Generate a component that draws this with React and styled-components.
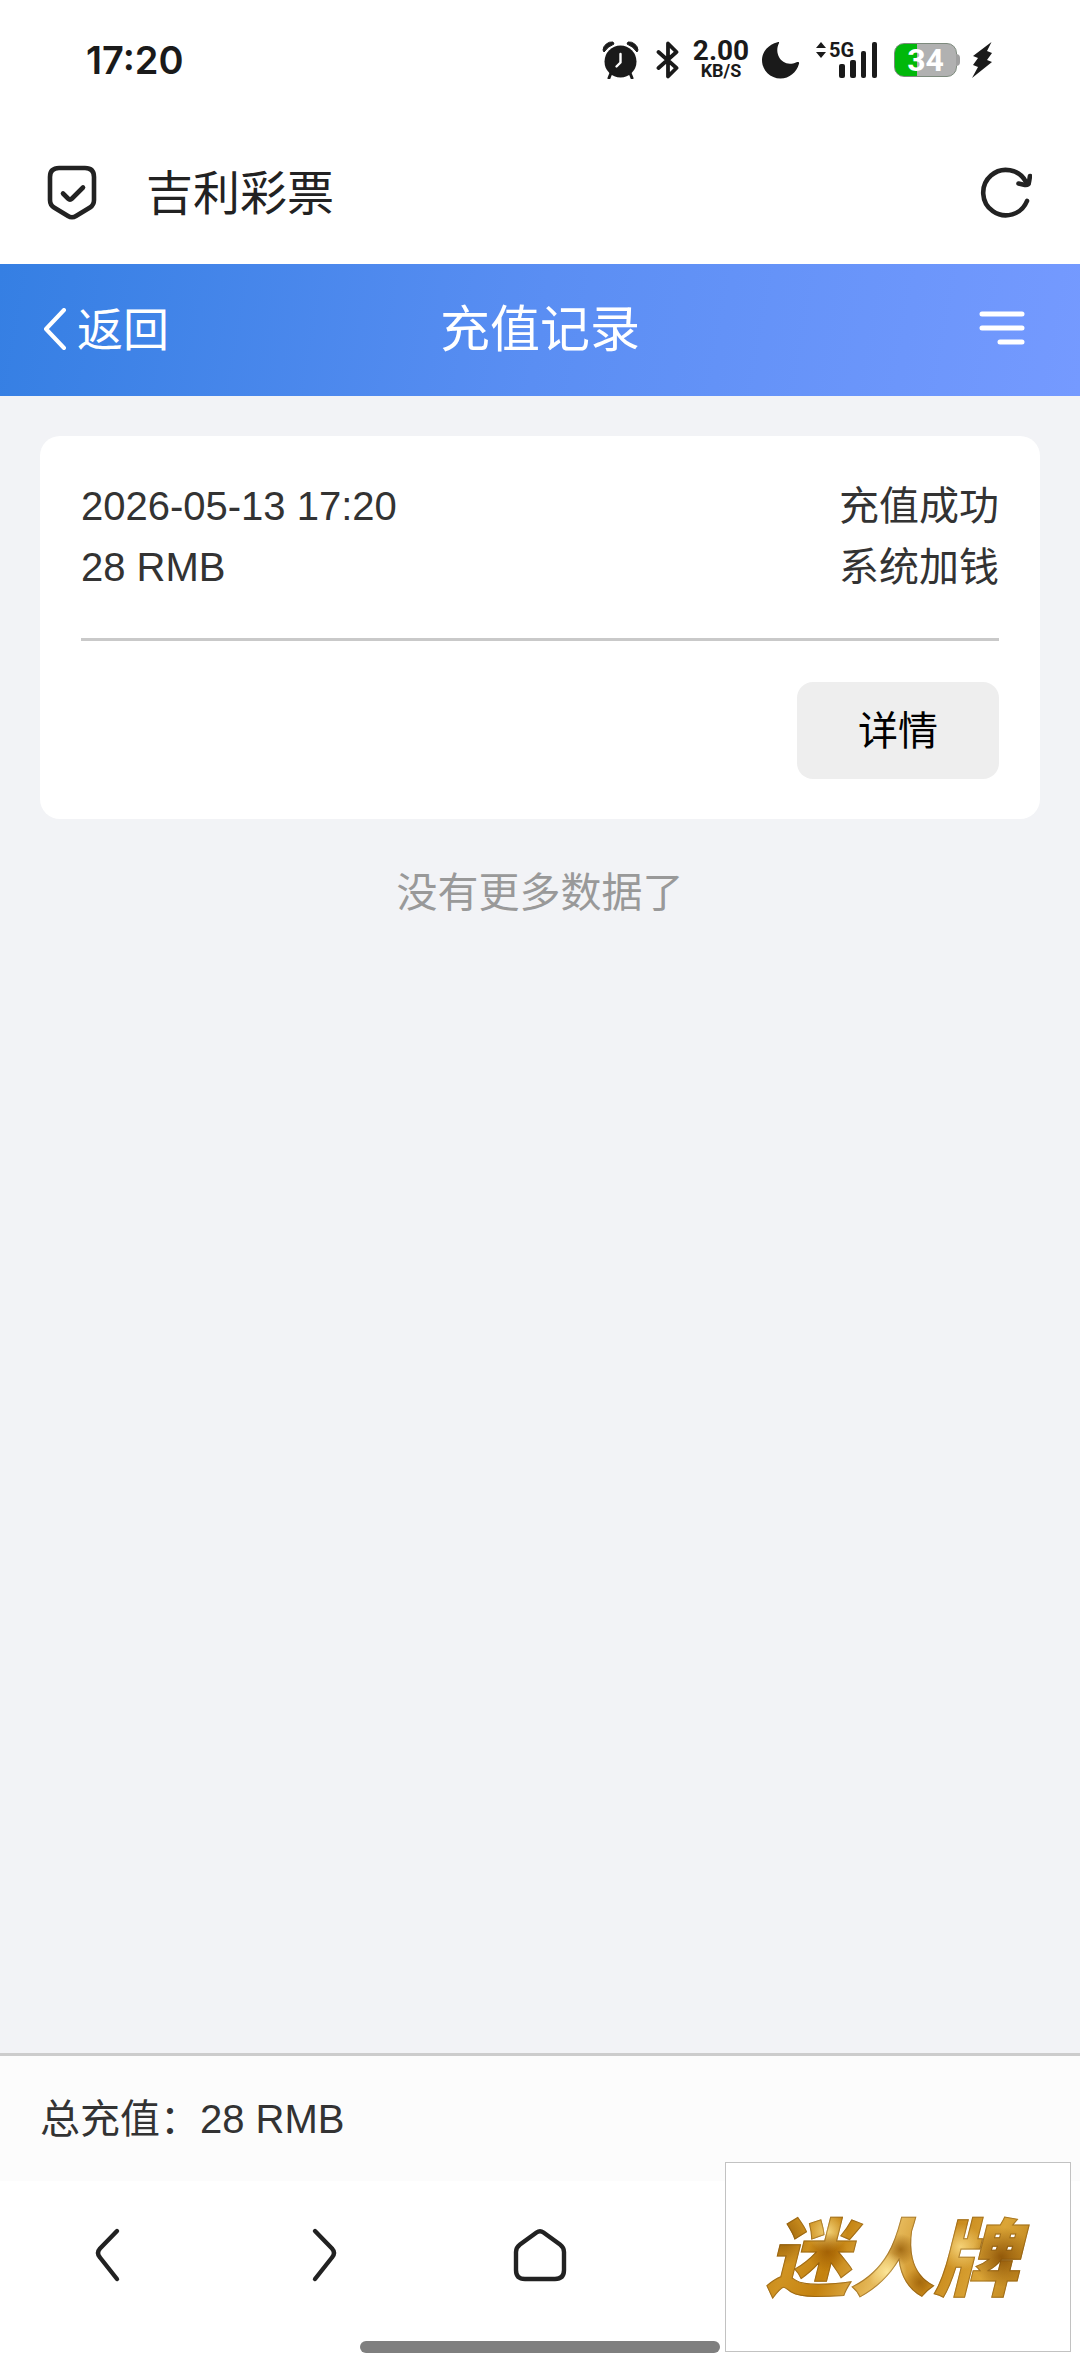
import React from "react"
import styled, {createGlobalStyle} from 'styled-components'

const GlobalStyle = createGlobalStyle`
	*{box-sizing:border-box;}
	body{
		margin:0;
		background:#f2f3f6;
		color:#333;
		font-family:"Liberation Sans", "Noto Sans CJK SC", sans-serif;
		font-size:40px;
		line-height:61px;
	}
	button{
		margin:0;
		padding:0;
		border:0;
		background:none;
		color:inherit;
		font-family:inherit;
	}
	a{
		color:inherit;
		text-decoration:none;
	}
	h1,p{
		margin:0;
		font-weight:400;
	}
	svg{display:block;}
`

const Screen = styled.div`
	display:flex;
	flex-direction:column;
	min-height:100vh;
`

////PHONE STATUS BAR
const StatusRow = styled.div`
	display:flex;
	align-items:center;
	justify-content:space-between;
	height:120px;
	padding:0 88px 0 86px;
	background:#fff;
	color:#1a1a1a;
	font-family:Roboto, sans-serif;
	font-weight:700;
`

const Clock = styled.time`
	font-family:Inter, sans-serif;
	font-size:38px;
	font-weight:600;
	line-height:40px;
`

const StatusIcons = styled.div`
	display:flex;
	align-items:center;
	gap:12px;
`

const NetSpeed = styled.div`
	display:flex;
	flex-direction:column;
	align-items:center;
	width:58px;
`

const SpeedValue = styled.span`
	font-size:28px;
	line-height:22px;
`

const SpeedUnit = styled.span`
	font-size:18px;
	line-height:18px;
`

const Battery = styled.div`
	position:relative;
	display:flex;
	align-items:center;
	justify-content:center;
	width:63px;
	height:34px;
	margin-right:3px;
	border:1px solid #7d8a7d;
	border-radius:10px;
	background:linear-gradient(90deg, #00b80a ${props=>props.$level}%, #b1b1b1 ${props=>props.$level}%);
	color:#fff;
	font-size:32px;
	line-height:32px;
	&::after{
		content:'';
		position:absolute;
		right:-4px;
		top:10px;
		width:4px;
		height:12px;
		border-radius:0 4px 4px 0;
		background:#a0a0a0;
	}
`

const Signal = styled.svg`
	overflow:visible;
	font-size:20px;
`

const StatusBar = () =>(
	<StatusRow>
		<Clock>17:20</Clock>
		<StatusIcons>
			<svg width="42" height="38" viewBox="0 0 42 38" fill="#1a1a1a">
				<path d="M1 9A9 9 0 0 1 11 1L12 3A22 22 0 0 0 2 11ZM36 9A9 9 0 0 0 26 1L25 3A22 22 0 0 1 35 11Z" stroke="#1a1a1a" strokeLinejoin="round"/>
				<circle cx="18.5" cy="20.5" r="16"/>
				<path d="M9 32L7 37M28 32L30 37" stroke="#1a1a1a" strokeWidth="3" strokeLinecap="round"/>
				<path d="M18.5 13V21.5L14.5 25.5" fill="none" stroke="#fff" strokeWidth="2.4" strokeLinecap="round" strokeLinejoin="round"/>
			</svg>
			<svg width="24" height="38" viewBox="0 0 24 38" fill="none" stroke="#1a1a1a" strokeWidth="3.8" strokeLinecap="round" strokeLinejoin="round">
				<path d="M2.5 11L20.5 27L12 35.5V2.5L20.5 11L2.5 27"/>
			</svg>
			<NetSpeed>
				<SpeedValue>2.00</SpeedValue>
				<SpeedUnit>KB/S</SpeedUnit>
			</NetSpeed>
			<svg width="42" height="38" viewBox="0 0 42 38" fill="#1a1a1a">
				<path d="M15.500 1.200C17 .6 17.500 1.200 16.800 2.600C11.500 13.500 21 27.500 34.500 21.200C36.400 20.500 37.500 21 37 22.800C34.500 31.500 27.500 37.500 18.500 37.500C8.500 37.500 0 29.500 0 19C0 10.500 6.500 3.500 15.500 1.200Z"/>
			</svg>
			<Signal width="66" height="38" viewBox="0 0 66 38" fill="#1a1a1a">
				<path d="M0 7L5 1L10 7ZM0 11H10L5 17Z"/>
				<text x="13" y="16">5G</text>
				<rect x="23" y="23" width="6" height="14" rx="2"/>
				<rect x="34" y="19" width="6" height="18" rx="2"/>
				<rect x="45" y="10" width="5" height="27" rx="2"/>
				<rect x="56" y="1" width="5" height="36" rx="2"/>
			</Signal>
			<Battery $level={36}>34</Battery>
			<svg width="20" height="38" viewBox="0 0 20 38" fill="#1a1a1a">
				<path d="M19.500 1L1 15L6 17L1 24L6 26L0 37L20 21L15 19L20 12L15 10Z"/>
			</svg>
		</StatusIcons>
	</StatusRow>
)

////BROWSER ADDRESS BAR
const AddressRow = styled.div`
	display:flex;
	align-items:center;
	height:144px;
	padding:0 48px 0 46px;
	background:#fff;
	color:#222;
`

const SiteName = styled.p`
	flex:1;
	padding:4px 0 0 48px;
	font-size:47px;
	line-height:60px;
`

const AddressBar = () =>(
	<AddressRow>
		<svg width="52" height="56" viewBox="0 0 52 56" fill="none" stroke="#222" strokeWidth="4.6" strokeLinecap="round" strokeLinejoin="round">
			<path d="M13 4H39Q48 4 48 13V36Q48 41 44 43.500L30 52Q26 54.500 22 52L8 43.500Q4 41 4 36V13Q4 4 13 4Z"/>
			<path d="M17 29.500L22 34.500Q24 36.500 26 34.500L37 23.500"/>
		</svg>
		<SiteName>吉利彩票</SiteName>
		<button type="button" aria-label="刷新">
			<svg width="52" height="52" viewBox="0 0 52 52" fill="none" stroke="#222" strokeWidth="4.6" strokeLinecap="round" strokeLinejoin="round">
				<path d="M47 35A22.700 22.700 0 1 1 46 16"/>
				<path d="M38.500 17.500L45 19Q49 19.500 49 16L50 10"/>
			</svg>
		</button>
	</AddressRow>
)

////PAGE HEADER
const HeaderRow = styled.header`
	display:grid;
	grid-template-columns:1fr auto 1fr;
	align-items:center;
	height:132px;
	padding:0 42px;
	background:linear-gradient(100deg, #357fe3, #5a8ef3 50%, #759aff);
	color:#fff;
`

const BackLink = styled.a`
	display:flex;
	align-items:center;
	gap:9px;
	font-size:46px;
`

const PageTitle = styled.h1`
	font-size:50px;
	line-height:60px;
`

const MenuButton = styled.button`
	justify-self:end;
	padding:0 10px 4px 0;
`

const Header = () =>(
	<HeaderRow>
		<BackLink href="#back">
			<svg width="26" height="44" viewBox="0 0 26 44" fill="none" stroke="#fff" strokeWidth="4" strokeLinecap="round" strokeLinejoin="round">
				<path d="M22 2L4 21L22 40"/>
			</svg>
			返回
		</BackLink>
		<PageTitle>充值记录</PageTitle>
		<MenuButton type="button" aria-label="菜单">
			<svg width="50" height="34" viewBox="0 0 50 34" fill="none" stroke="#fff" strokeWidth="5" strokeLinecap="round">
				<path d="M4 3H44M4 17H44M22 31H44"/>
			</svg>
		</MenuButton>
	</HeaderRow>
)

////RECHARGE RECORDS
const Records = styled.main`
	flex:1;
	padding:40px;
`

const Card = styled.article`
	padding:40px 41px;
	border-radius:20px;
	background:#fff;
`

const CardLine = styled.div`
	display:flex;
	justify-content:space-between;
`

const CardAction = styled.div`
	display:flex;
	justify-content:flex-end;
	margin-top:40px;
	padding-top:41px;
	border-top:3px solid #c9c9c9;
`

const DetailButton = styled.button`
	width:202px;
	height:97px;
	border-radius:16px;
	background:#eee;
	color:#000;
	font-size:40px;
	line-height:60px;
`

const EndNote = styled.p`
	padding-top:44px;
	color:#999;
	font-size:41px;
	text-align:center;
`

const RecordCard = (props) =>{
	const {time, amount, status, source} = props.record;
	return (
		<Card>
			<CardLine><time>{time}</time><span>{status}</span></CardLine>
			<CardLine><span>{amount}</span><span>{source}</span></CardLine>
			<CardAction>
				<DetailButton type="button">详情</DetailButton>
			</CardAction>
		</Card>
	)
}

const Total = styled.footer`
	height:128px;
	padding:33px 40px 0;
	border-top:3px solid #ccc;
	background:#fcfcfc;
`

////BROWSER NAVIGATION
const Bottom = styled.div`
	position:relative;
	display:flex;
	flex-direction:column;
	align-items:center;
	padding-bottom:21px;
	background:#fff;
`

const NavRow = styled.nav`
	display:grid;
	grid-template-columns:repeat(5, 1fr);
	width:100%;
	height:160px;
	padding-top:12px;
`

const NavButton = styled.button`
	display:flex;
	align-items:center;
	justify-content:center;
	height:124px;
`

const HomeBar = styled.div`
	width:33.3333%;
	height:12px;
	border-radius:6px;
	background:#7f7f7f;
`

//floating badge over the right end of the navigation
const Badge = styled.a`
	position:absolute;
	right:9px;
	bottom:22px;
	display:flex;
	align-items:center;
	justify-content:center;
	width:346px;
	height:190px;
	border:1px solid #c2c2c2;
	background:#fff;
`

const BadgeText = styled.span`
	padding:6px 16px 0 4px;
	background:
		radial-gradient(circle at 8% 35%, rgba(122,70,0,.6), transparent 10%),
		radial-gradient(circle at 24% 46%, rgba(150,84,0,.7), transparent 9%),
		radial-gradient(circle at 24% 30%, rgba(255,232,150,.8), transparent 9%),
		radial-gradient(circle at 46% 62%, rgba(255,236,160,.9), transparent 12%),
		radial-gradient(circle at 51% 44%, rgba(140,82,0,.7), transparent 10%),
		radial-gradient(circle at 58% 70%, rgba(140,82,0,.6), transparent 8%),
		radial-gradient(circle at 88% 50%, rgba(130,72,0,.8), transparent 12%),
		radial-gradient(circle at 73% 42%, rgba(255,226,140,.8), transparent 11%),
		linear-gradient(115deg, #b97a0c, #d09322 18%, #c4820f 30%, #e6b95a 46%, #c8881a 62%, #dba537 78%, #a96c08);
	-webkit-background-clip:text;
	background-clip:text;
	-webkit-text-stroke:1px rgba(120,74,8,.5);
	color:transparent;
	font-size:84px;
	font-style:italic;
	font-weight:900;
	line-height:120px;
`

const navIcons = [
	{label:'后退', path:'M37 4L20 21.500Q16 26 20 30.500L37 52'},
	{label:'前进', path:'M19 4L36 21.500Q40 26 36 30.500L19 52'},
	{label:'主页', path:'M24.500 5.500Q28 3 31.500 5.500L48 17.500Q52 20.500 52 25V43Q52 52 43 52H13Q4 52 4 43V25Q4 20.500 8 17.500Z'}
]

const Navigation = () =>(
	<Bottom>
		<NavRow>
			{navIcons.map((item,index)=>(
				<NavButton type="button" key={index} aria-label={item.label}>
					<svg width="56" height="56" viewBox="0 0 56 56" fill="none" stroke="#222" strokeWidth="4.4" strokeLinecap="round" strokeLinejoin="round">
						<path d={item.path}/>
					</svg>
				</NavButton>
			))}
		</NavRow>
		<HomeBar/>
		<Badge href="#badge"><BadgeText>迷人牌</BadgeText></Badge>
	</Bottom>
)

const records = [
	{time:'2026-05-13 17:20', amount:'28 RMB', status:'充值成功', source:'系统加钱'}
]

export default class App extends React.Component{
	render(){
		return(
			<>
				<GlobalStyle/>
				<Screen>
					<StatusBar/>
					<AddressBar/>
					<Header/>
					<Records>
						{records.map((record,index)=>(<RecordCard key={index} record={record}/>))}
						<EndNote>没有更多数据了</EndNote>
					</Records>
					<Total>总充值：28 RMB</Total>
					<Navigation/>
				</Screen>
			</>
		)
	}
}
